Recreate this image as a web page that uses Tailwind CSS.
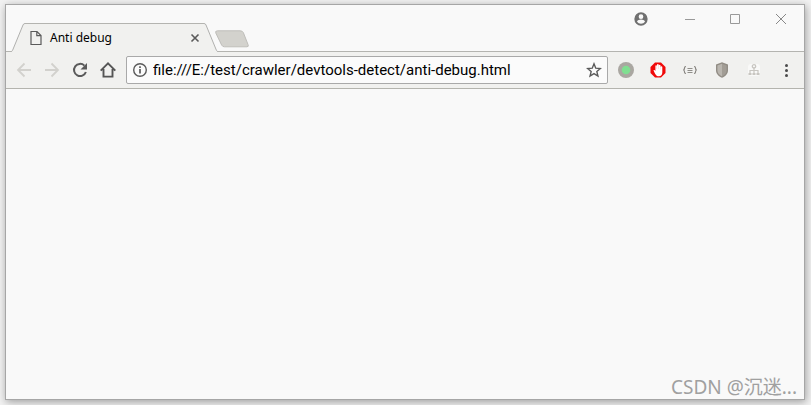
<!DOCTYPE html>
<html lang="en">
<head>
<meta charset="utf-8">
<title>Anti debug</title>
<script src="https://cdn.jsdelivr.net/npm/@tailwindcss/browser@4"></script>
</head>
<body class="flex min-h-screen flex-col bg-[#f2f2f2] pt-1 pr-1.5 pb-[5px] pl-[5px] font-['Noto_Sans','Noto_Sans_CJK_SC',sans-serif] text-black">
<div class="flex flex-1 flex-col border border-[#a6a6a6] bg-[#f9f9f9] shadow-[1px_2px_8px_rgba(0,0,0,0.35)]">
  <header class="flex h-[47px] justify-between border-b border-[#b4b4b0]">
    <div class="-mb-px flex items-end pl-[5px]">
      <div class="flex h-[29px]">
        <svg class="h-[29px] w-[14px]" viewBox="0 0 14 29" fill="none" aria-hidden="true"><path d="M0 29 1.500 27.500 12 2Q12.500.5 14 .5V29Z" fill="#f1f1ef"/><path d="M0 28.500Q1 28.500 1.500 27.500L12 2Q12.500.5 14 .5" stroke="#b0b0ae"/></svg>
        <div class="flex w-[179px] items-center border-t border-[#b4b4b0] bg-[#f1f1ef] pl-[3px]">
          <svg class="h-4 w-4" viewBox="0 0 16 16" fill="none" stroke="#5a5a5a" stroke-width="1.200" aria-hidden="true"><path d="M3 1.500h6l4 4v9H3zM8.800 1.500v4.200H13"/></svg>
          <span class="ml-1.5 flex-1 text-xs">Anti debug</span>
          <button aria-label="Close tab" class="mr-px flex h-4 w-4 items-center justify-center"><svg class="h-4 w-4" viewBox="0 0 16 16" stroke="#5a5a5a" stroke-width="1.600"><path d="m4.500 4.500 7 7m0-7-7 7"/></svg></button>
        </div>
        <svg class="h-[29px] w-[14px]" viewBox="0 0 14 29" fill="none" aria-hidden="true"><path d="M14 29 12.500 27.500 2 2Q1.500.5 0 .5V29Z" fill="#f1f1ef"/><path d="M14 28.500Q13 28.500 12.500 27.500L2 2Q1.500.5 0 .5" stroke="#b0b0ae"/></svg>
      </div>
      <button aria-label="New tab" class="-ml-1 mb-1"><svg class="h-[18px] w-9" viewBox="0 0 36 18"><path d="M3.500.8H26Q28.500.8 29.300 2.500L34 14.500Q35 16.800 33 16.800H10.500Q8.500 16.800 7.600 15L1.800 3Q1 .8 3.500.8Z" fill="#d3d2cd" stroke="#bfbeba"/></svg></button>
    </div>
    <div class="flex h-7">
      <button aria-label="Profile" class="mr-[11px] flex w-7 items-center justify-center"><svg class="h-4 w-4" viewBox="0 0 24 24" fill="#707070"><path d="M12 2a10 10 0 1 0 0 20 10 10 0 0 0 0-20Zm0 3a3.500 3.500 0 1 1 0 7 3.500 3.500 0 0 1 0-7Zm0 14.200a7.200 7.200 0 0 1-6-3.220c.03-1.990 4-3.080 6-3.080s5.970 1.090 6 3.080a7.200 7.200 0 0 1-6 3.220Z"/></svg></button>
      <button aria-label="Minimize" class="flex w-[46px] items-center justify-center"><svg class="h-3 w-3" viewBox="0 0 12 12" stroke="#999"><path d="M2 6.500h10"/></svg></button>
      <button aria-label="Maximize" class="flex w-[46px] items-center justify-center"><svg class="h-3 w-3" viewBox="0 0 12 12" fill="none" stroke="#999"><path d="M1.500 1.500h9v9h-9z"/></svg></button>
      <button aria-label="Close" class="flex w-[46px] items-center justify-center"><svg class="h-3 w-3" viewBox="0 0 12 12" stroke="#888"><path d="m1 1 10 10M11 1 1 11"/></svg></button>
    </div>
  </header>
  <nav aria-label="Toolbar" class="flex h-[37px] items-center border-b border-[#b4b4ae] bg-[#f1f1ef] pr-0.5 pl-1">
    <button aria-label="Back" class="flex w-7 justify-center"><svg class="h-4 w-4" viewBox="0 0 16 16" fill="none" stroke="#d2d1cd" stroke-width="1.800"><path d="M15 8H2.500M8.500 1.500 2 8l6.500 6.500"/></svg></button>
    <button aria-label="Forward" class="flex w-7 justify-center"><svg class="h-4 w-4" viewBox="0 0 16 16" fill="none" stroke="#d2d1cd" stroke-width="1.800"><path d="M1 8h12.500M7.500 1.500 14 8l-6.500 6.500"/></svg></button>
    <button aria-label="Reload" class="flex w-7 justify-center"><svg class="h-4 w-4" viewBox="0 0 16 16" fill="none"><path d="M12.400 3.600A6.100 6.100 0 1 0 13.900 10" stroke="#5a5a5a" stroke-width="2"/><path d="M15 1v6.500H8.500Z" fill="#5a5a5a"/></svg></button>
    <button aria-label="Home" class="flex w-7 justify-center"><svg class="h-4 w-4" viewBox="0 0 16 16" fill="none" stroke="#555" stroke-width="1.900"><path d="M.7 8.700 8 1.400l7.300 7.300M3.500 7v7.600h9V7"/></svg></button>
    <form class="mr-0.5 ml-1 flex h-7 min-w-0 flex-1 items-center rounded-xs border border-[#a9a9a9] bg-[#fbfbfb] pr-[5px] pl-[5px]">
      <button type="button" aria-label="Site information" class="flex"><svg class="h-4 w-4" viewBox="0 0 16 16" fill="none" stroke="#5a5a5a"><circle cx="8" cy="8" r="6.300" stroke-width="1.400"/><path d="M8 7v4.500M8 4.300V6" stroke-width="1.700"/></svg></button>
      <input type="text" aria-label="Address" value="file:///E:/test/crawler/devtools-detect/anti-debug.html" class="ml-[5px] min-w-0 flex-1 bg-transparent font-[Roboto,sans-serif] text-[15px] outline-none">
      <button type="button" aria-label="Bookmark" class="flex"><svg class="h-4 w-4" viewBox="0 0 16 16" fill="none" stroke="#5a5a5a" stroke-width="1.400"><path d="m8 1.800 1.750 4.350 4.650.35-3.550 3.050 1.100 4.550L8 11.650 4.050 14.100l1.100-4.550L1.600 6.500l4.650-.35Z"/></svg></button>
    </form>
    <button aria-label="Status extension" class="flex w-8 justify-center"><svg class="h-4 w-4" viewBox="0 0 16 16"><circle cx="8" cy="8" r="8" fill="#aaa7a1"/><circle cx="8" cy="8" r="4.300" fill="#80df91"/></svg></button>
    <button aria-label="Ad blocker" class="flex w-8 justify-center"><svg class="h-4 w-4" viewBox="0 0 16 16"><path d="M5 .5h6L15.500 5v6L11 15.500H5L.5 11V5Z" fill="#f00909"/><path d="M3.500 8.200c.8-.5 1.500.1 1.900.8V3.800c0-.9 1.500-.9 1.500 0V7h.1V2.800c0-1 1.700-1 1.700 0V7h.1V3.300c0-.9 1.700-.9 1.700 0V7.500h.1V5c0-.9 1.700-.9 1.700 0v5.500c0 2.300-1.300 3.700-3.500 3.700-2.600 0-3.500-1.700-5.300-6Z" fill="#fff"/></svg></button>
    <button aria-label="JSON viewer" class="flex w-8 justify-center"><svg class="h-4 w-4" viewBox="0 0 16 16" fill="none" stroke="#85827d" stroke-width="1.200"><path d="M4 4.500c-1.300 0-1.500.3-1.500 1.500S2.300 8 1.200 8c1.100 0 1.300.8 1.300 2s.2 1.500 1.500 1.500M12 4.500c1.300 0 1.500.3 1.500 1.500s.2 2 1.300 2c-1.100 0-1.300.8-1.300 2s-.2 1.500-1.500 1.500"/><path d="M5.500 6.500h5M5.500 8.500h5M5.500 10.500h5" stroke-width=".9"/></svg></button>
    <button aria-label="Shield" class="flex w-8 justify-center"><svg class="h-4 w-4" viewBox="0 0 16 16"><path d="M8 .3 14 2.500v6c0 3.200-2.500 5.800-6 7.300-3.500-1.500-6-4.100-6-7.300v-6Z" fill="#928d85"/><path d="M8 1.700v12.700c-2.700-1.300-4.600-3.400-4.600-5.900v-5Z" fill="#bab6af"/><path d="M8 1.700v12.700c2.700-1.300 4.600-3.400 4.600-5.900v-5Z" fill="#a29d95"/></svg></button>
    <button aria-label="Site map" class="flex w-8 justify-center"><svg class="h-4 w-4" viewBox="0 0 16 16" fill="none" stroke="#c8c6c1"><rect x="2" y="2" width="12" height="12" rx="3" fill="#f9f9f8" stroke="none"/><circle cx="8" cy="4.300" r="1.700" stroke-width="1.300"/><path d="M8 6v5M4 11V8.500h8V11" stroke-width="1.200"/><path d="M2.500 11h3v2h-3zM6.500 11h3v2h-3zM10.500 11h3v2h-3z" fill="#c8c6c1" stroke="none"/></svg></button>
    <button aria-label="Menu" class="flex w-8 justify-center"><svg class="h-4 w-4" viewBox="0 0 16 16" fill="#4a4a4a"><circle cx="8.500" cy="3.500" r="1.500"/><circle cx="8.500" cy="8.500" r="1.500"/><circle cx="8.500" cy="13.500" r="1.500"/></svg></button>
  </nav>
  <main class="flex flex-1 items-end justify-end pr-[7px]">
    <p class="text-[19px] leading-6 text-[#a0a0a0]">CSDN @沉迷...</p>
  </main>
</div>
</body>
</html>
